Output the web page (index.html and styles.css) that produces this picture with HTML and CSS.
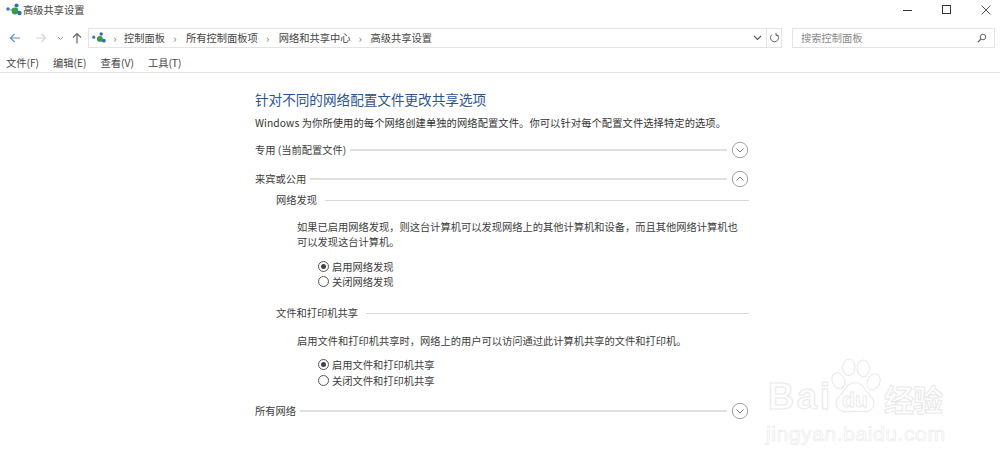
FILE: index.html
```html
<!DOCTYPE html>
<html lang="zh-CN">
<head>
<meta charset="utf-8">
<title>高级共享设置</title>
<link rel="stylesheet" href="styles.css">
</head>
<body>
<div class="titlebar">
  <svg class="appicon" width="18" height="16" viewBox="0 0 18 16"><circle cx="3" cy="7" r="1.8" fill="#2f7fc0"/><path d="M5 8 L11 8" stroke="#4a9" stroke-width="1"/><circle cx="10" cy="9" r="3.4" fill="#3b9a4a"/><circle cx="11.5" cy="3.500" r="2" fill="#2d6fb5"/><circle cx="14.500" cy="11" r="2.2" fill="#2d6fb5"/></svg>
  <span class="wintitle">高级共享设置</span>
  <div class="winbtns">
    <svg width="10" height="10" viewBox="0 0 10 10"><path d="M0 5.500H9" stroke="#333" stroke-width="1"/></svg>
    <svg width="10" height="10" viewBox="0 0 10 10"><rect x=".5" y=".5" width="8" height="8" fill="none" stroke="#333"/></svg>
    <svg width="10" height="10" viewBox="0 0 10 10"><path d="M.5 .5L9.500 9.500M9.500 .5L.5 9.500" stroke="#444" stroke-width=".9"/></svg>
  </div>
</div>
<div class="navrow">
  <div class="navbtns">
    <svg width="12" height="12" viewBox="0 0 12 12"><path d="M11 6H1.500M5.500 2L1.500 6L5.500 10" fill="none" stroke="#5b93c8" stroke-width="1.2"/></svg>
    <svg width="12" height="12" viewBox="0 0 12 12"><path d="M1 6H10.500M6.500 2L10.500 6L6.500 10" fill="none" stroke="#d5d5d5" stroke-width="1.2"/></svg>
    <svg width="7" height="5" viewBox="0 0 7 5"><path d="M1 1L3.500 3.500L6 1" fill="none" stroke="#999"/></svg>
    <svg width="12" height="12" viewBox="0 0 12 12"><path d="M6 11.500V1.500M2 5.500L6 1.500L10 5.500" fill="none" stroke="#666" stroke-width="1.2"/></svg>
  </div>
  <div class="address">
    <svg class="appicon" width="16" height="14" viewBox="0 0 18 16"><circle cx="3" cy="7" r="1.8" fill="#2f7fc0"/><circle cx="10" cy="9" r="3.4" fill="#3b9a4a"/><circle cx="11.5" cy="3.500" r="2" fill="#2d6fb5"/><circle cx="14.500" cy="11" r="2.2" fill="#2d6fb5"/></svg>
    <span class="sep first-sep">›</span><span>控制面板</span>
    <span class="sep">›</span><span>所有控制面板项</span>
    <span class="sep">›</span><span>网络和共享中心</span>
    <span class="sep last-sep">›</span><span>高级共享设置</span>
    <svg class="addrdrop" width="9" height="6" viewBox="0 0 9 6"><path d="M1 1L4.500 4.500L8 1" fill="none" stroke="#555" stroke-width="1.1"/></svg>
    <span class="refresh"><svg width="11" height="12" viewBox="0 0 11 12"><path d="M3 2.600A4 4 0 1 0 8 2.600M7 .8V3.400H9.500" fill="none" stroke="#666"/></svg></span>
  </div>
  <div class="search">
    <span>搜索控制面板</span>
    <svg width="10" height="10" viewBox="0 0 10 10"><circle cx="6" cy="4" r="2.8" fill="none" stroke="#666"/><path d="M4 6L1 9" stroke="#666" stroke-width="1.3"/></svg>
  </div>
</div>
<nav class="menubar">
  <span>文件(F)</span><span>编辑(E)</span><span>查看(V)</span><span>工具(T)</span>
</nav>
<main class="content">
  <h1 class="heading">针对不同的网络配置文件更改共享选项</h1>
  <p class="intro">Windows 为你所使用的每个网络创建单独的网络配置文件。你可以针对每个配置文件选择特定的选项。</p>
  <div class="group first">
    <span>专用 (当前配置文件)</span><i class="rule"></i>
    <svg class="chev" width="18" height="18" viewBox="0 0 18 18"><circle cx="9" cy="9" r="7.7" fill="none" stroke="#a0a0a0"/><path d="M5.500 7.500L9 11L12.500 7.500" fill="none" stroke="#777"/></svg>
  </div>
  <div class="group second">
    <span>来宾或公用</span><i class="rule"></i>
    <svg class="chev" width="18" height="18" viewBox="0 0 18 18"><circle cx="9" cy="9" r="7.7" fill="none" stroke="#a0a0a0"/><path d="M5.500 10.500L9 7L12.500 10.500" fill="none" stroke="#777"/></svg>
  </div>
  <section class="sub">
    <div class="subhead"><span>网络发现</span><i class="rule"></i></div>
    <p class="desc">如果已启用网络发现，则这台计算机可以发现网络上的其他计算机和设备，而且其他网络计算机也<br>可以发现这台计算机。</p>
    <div class="radios">
      <div class="radio on"><b></b><span>启用网络发现</span></div>
      <div class="radio"><b></b><span>关闭网络发现</span></div>
    </div>
  </section>
  <section class="sub share">
    <div class="subhead"><span>文件和打印机共享</span><i class="rule"></i></div>
    <p class="desc">启用文件和打印机共享时，网络上的用户可以访问通过此计算机共享的文件和打印机。</p>
    <div class="radios">
      <div class="radio on"><b></b><span>启用文件和打印机共享</span></div>
      <div class="radio"><b></b><span>关闭文件和打印机共享</span></div>
    </div>
  </section>
  <div class="group last">
    <span>所有网络</span><i class="rule"></i>
    <svg class="chev" width="18" height="18" viewBox="0 0 18 18"><circle cx="9" cy="9" r="7.7" fill="none" stroke="#a0a0a0"/><path d="M5.500 7.500L9 11L12.500 7.500" fill="none" stroke="#777"/></svg>
  </div>
</main>
<div class="watermark">
  <div class="wmtop">
    <span class="wmbai">Bai</span>
    <svg class="wmpaw" width="54" height="60" viewBox="0 0 50 58"><g fill="#fff" stroke="#e8e8e8" stroke-width="1"><ellipse cx="9" cy="22" rx="6" ry="8" transform="rotate(-25 9 22)"/><ellipse cx="19" cy="9" rx="6" ry="8"/><ellipse cx="33" cy="10" rx="6" ry="8"/><ellipse cx="43" cy="23" rx="6" ry="8" transform="rotate(25 43 23)"/><path d="M25 24C34 24 35 33 40 37C47 43 42 53 33 52C28 51.500 22 51.500 17 52C8 53 3 43 10 37C15 33 16 24 25 24Z"/></g><text x="25" y="47" class="wmdu">du</text></svg>
    <span class="wmjy">经验</span>
  </div>
  <div class="wmurl">jingyan.baidu.com</div>
</div>
</body>
</html>
```
FILE: styles.css
```css
* { box-sizing: border-box; }
html, body { margin: 0; height: 467px; overflow: hidden; background: #fff; }
body {
  position: relative;
  font-family: "Noto Sans CJK SC", "Liberation Sans", sans-serif;
  font-size: 10.25px;
  line-height: 14px;
  color: #3c3c3c;
}
.titlebar { height: 28px; display: flex; align-items: center; padding-left: 5px; }
.appicon { flex: none; }
.wintitle { color: #444; margin-top: -8px; }
.titlebar .appicon { margin-top: -8px; }
.winbtns { margin-left: auto; display: flex; gap: 29px; padding-right: 9px; margin-top: -8px; }
.navrow { height: 20px; display: flex; align-items: center; }
.navbtns { width: 88px; display: flex; align-items: center; padding-left: 9px; }
.navbtns svg:nth-child(2) { margin-left: 14px; }
.navbtns svg:nth-child(3) { margin-left: 10px; }
.navbtns svg:nth-child(4) { margin-left: 7px; }
.address {
  width: 694px; height: 20px;
  border: 1px solid #e4e4e4; display: flex; align-items: center;
  padding-left: 2px; color: #444;
}
.sep { width: 22px; text-align: center; color: #777; font-size: 11px; margin-left: -1px; }
.address .first-sep { width: 18px; }
.address .last-sep { width: 21px; }
.addrdrop { margin-left: auto; margin-right: 4px; }
.refresh { width: 15px; height: 18px; border-left: 1px solid #e4e4e4; display: flex; align-items: center; justify-content: center; }
.search {
  width: 203px; height: 20px; margin-left: 10px;
  border: 1px solid #e4e4e4; display: flex; align-items: center; justify-content: space-between;
  padding: 0 7px 0 8px; color: #8a8a8a;
}
.menubar { height: 25px; display: flex; gap: 14px; padding: 6px 0 0 6px; border-bottom: 1px solid #e5e5e5; color: #444; align-items: center; }
.content { width: 494px; margin-left: 255px; padding-top: 16px; }
.heading { margin: 0; font-size: 13.600px; line-height: 20px; font-weight: 400; color: #2a5591; }
.intro { margin: 6px 0 0; letter-spacing: .1px; line-height: 16px; color: #333; white-space: nowrap; }
.group { display: flex; align-items: center; height: 18px; gap: 4px; }
.first { margin-top: 10px; }
.second { margin-top: 11px; }
.last { margin-top: 14px; }
.rule { flex: 1; height: 1px; background: #d8d8d8; display: block; }
.group .rule { height: 2px; background: #dedede; }
.chev { flex: none; }
.sub { padding-left: 21px; }
.subhead { display: flex; align-items: center; gap: 8px; height: 14px; margin-top: 5px; }
.desc { margin: 12px 0 0 21px; line-height: 15px; white-space: nowrap; color: #3c3c3c; }
.radios { margin: 10px 0 0 42px; }
.radio { display: flex; align-items: center; height: 15px; gap: 3px; }
.radio b { width: 11px; height: 11px; border: 1px solid #555; border-radius: 50%; display: block; flex: none; position: relative; }
.radio.on b::after { content: ""; position: absolute; inset: 2px; background: #444; border-radius: 50%; }
.share .subhead { margin-top: 17px; }
.share .desc { margin-top: 13px; }
.share .radios { margin-top: 9px; }
.share .radio + .radio { margin-top: 1px; }
.watermark { position: absolute; left: 766px; top: 358px; width: 190px; color: #fff; }
.wmtop { display: flex; align-items: flex-end; height: 60px; }
.wmpaw { flex: none; }
.wmbai, .wmjy, .wmurl { font-family: "Liberation Sans", "Noto Sans CJK SC", sans-serif; -webkit-text-stroke: 1px #e8e8e8; }
.wmbai { font-size: 36px; line-height: 42px; font-weight: 700; letter-spacing: 3px; width: 60px; margin-left: 2px; flex: none; }
.wmjy { font-family: "Noto Sans CJK SC", sans-serif; font-size: 30px; line-height: 40px; font-weight: 700; margin-left: 2px; white-space: nowrap; letter-spacing: -1px; }
.wmdu { font-family: "Liberation Sans", sans-serif; font-size: 20px; font-weight: 700; text-anchor: middle; fill: #fff; stroke: #e8e8e8; stroke-width: .8px; }
.wmurl { font-size: 21px; line-height: 24px; margin-top: 4px; -webkit-text-stroke: .7px #ececec; white-space: nowrap; letter-spacing: .6px; }
```
